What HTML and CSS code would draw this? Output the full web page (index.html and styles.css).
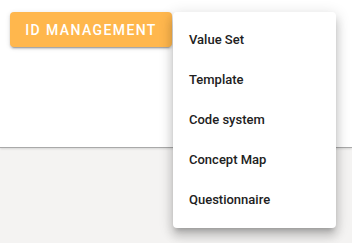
FILE: index.html
```html
<!DOCTYPE html>
<html lang="en">
<head>
  <meta charset="UTF-8">
  <title>ID Management</title>
  <link rel="stylesheet" href="styles.css">
</head>
<body>
  <div class="top">
    <div class="toolbar">
      <button class="id-btn" type="button">ID Management</button>
      <ul class="menu">
        <li>Value Set</li>
        <li>Template</li>
        <li>Code system</li>
        <li>Concept Map</li>
        <li>Questionnaire</li>
      </ul>
    </div>
  </div>
  <div class="bottom"></div>
</body>
</html>
```

FILE: styles.css
```css
/* base */
html, body { height: 100%; }
body { margin: 0; display: flex; flex-direction: column; font-family: Roboto, "Liberation Sans", sans-serif; background: #f4f3f2; color: rgba(0,0,0,0.87); }
.top { position: relative; z-index: 1; flex: 0 0 147px; background: #fff; border-bottom: 1px solid #a9a9a9; box-shadow: 0 1px 2px rgba(0,0,0,0.12); }
.bottom { flex: 1; background: #f4f3f2; }
.toolbar { position: relative; padding: 12px 0 0 10px; }
/* button */
.id-btn { width: 162px; height: 35px; padding: 0; background: #ffb74d; color: #fff; border: none; border-radius: 4px; font-family: inherit; font-size: 14px; font-weight: 500; letter-spacing: 1.4px; text-transform: uppercase; box-shadow: 0 3px 1px -2px rgba(0,0,0,0.2), 0 2px 2px 0 rgba(0,0,0,0.14), 0 1px 5px 0 rgba(0,0,0,0.12); cursor: pointer; }
/* dropdown */
.menu { position: absolute; z-index: 10; left: 173px; top: 12px; width: 163px; margin: 0; padding: 8px 0; list-style: none; background: #fff; border-radius: 4px; box-shadow: 0 5px 5px -3px rgba(0,0,0,0.2), 0 8px 10px 1px rgba(0,0,0,0.14), 0 3px 14px 2px rgba(0,0,0,0.12); }
.menu li { height: 40px; line-height: 40px; padding: 0 16px; font-size: 13px; font-weight: 500; color: #212121; }
```
